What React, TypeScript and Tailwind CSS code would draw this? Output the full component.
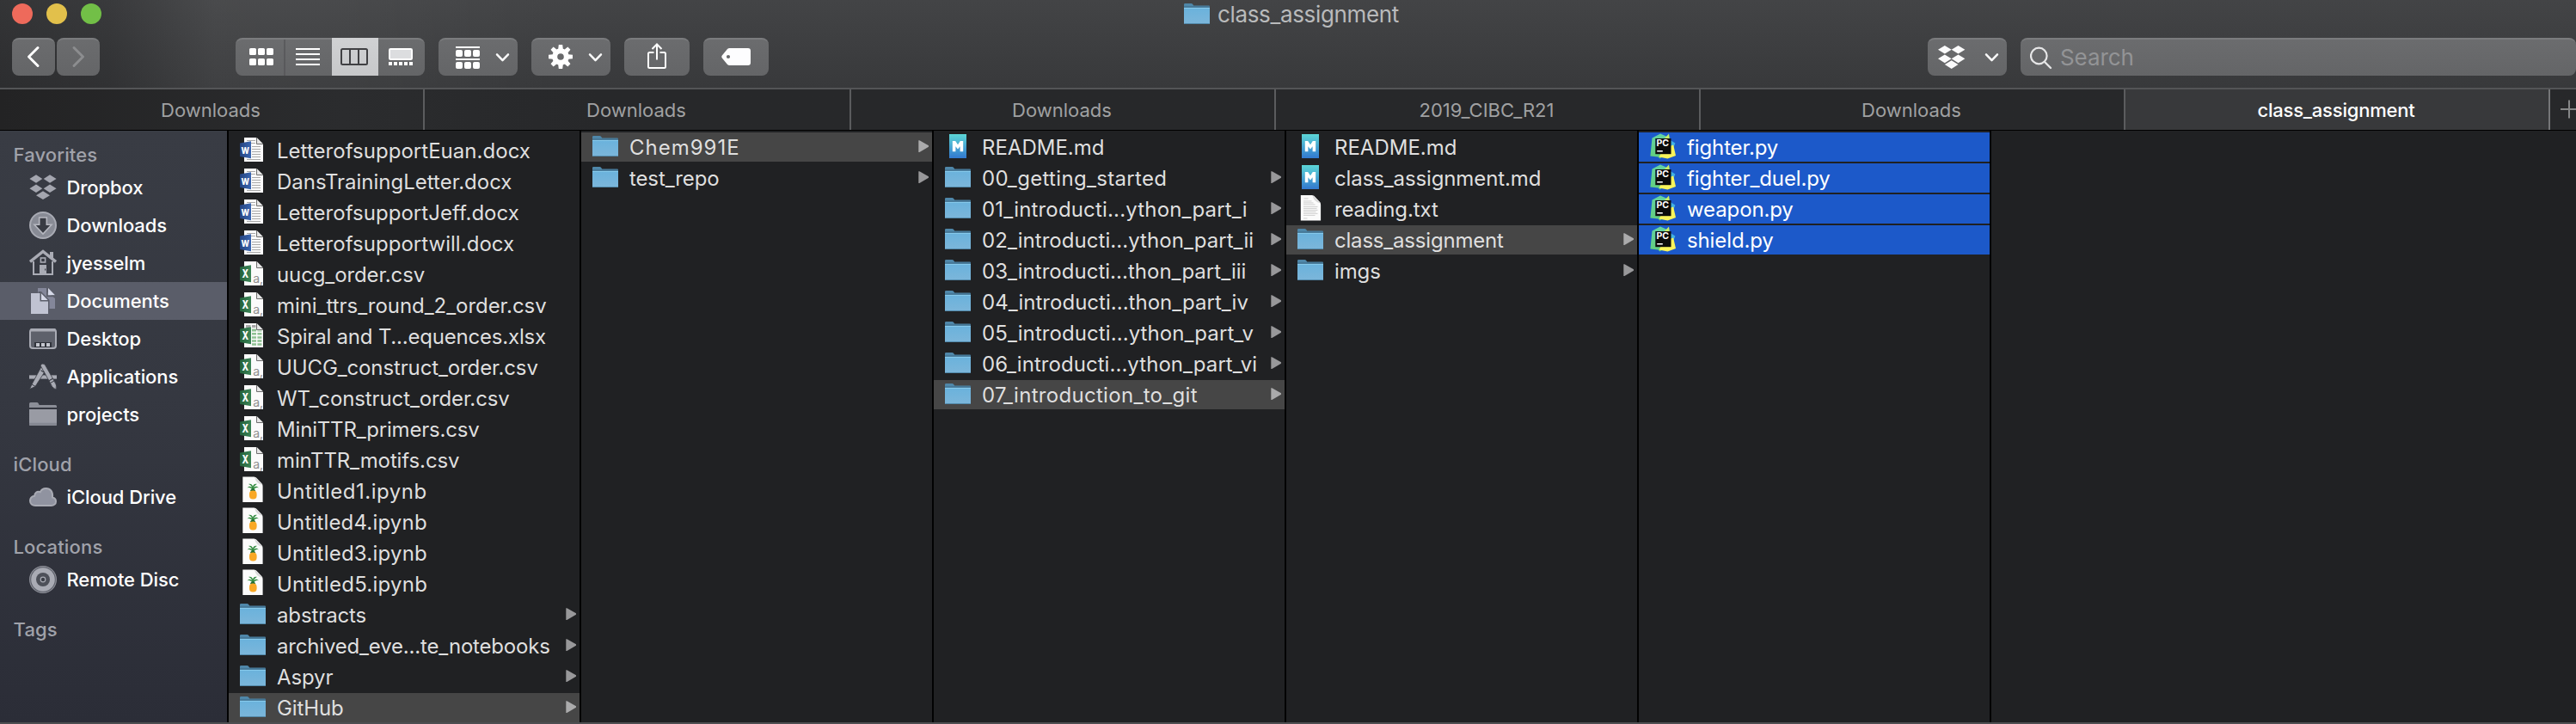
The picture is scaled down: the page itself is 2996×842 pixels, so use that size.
import type { ReactNode } from "react";

type Kind = "word" | "csv" | "xlsx" | "ipynb" | "folder" | "md" | "txt" | "py";
type Item = { name: string; kind: Kind; tracking?: string; state?: "path" | "selected" };

const DIGIT = "tracking-[0.17px]";
const NARROW = "tracking-[0.02px]";

const documents: Item[] = [
  { name: "LetterofsupportEuan.docx", kind: "word", tracking: "tracking-[0.03px]" },
  { name: "DansTrainingLetter.docx", kind: "word", tracking: "tracking-[0px]" },
  { name: "LetterofsupportJeff.docx", kind: "word", tracking: "tracking-[0.03px]" },
  { name: "Letterofsupportwill.docx", kind: "word", tracking: "tracking-[0.03px]" },
  { name: "uucg_order.csv", kind: "csv" },
  { name: "mini_ttrs_round_2_order.csv", kind: "csv", tracking: "tracking-[-0.05px]" },
  { name: "Spiral and T...equences.xlsx", kind: "xlsx", tracking: "tracking-[-0.2px]" },
  { name: "UUCG_construct_order.csv", kind: "csv" },
  { name: "WT_construct_order.csv", kind: "csv" },
  { name: "MiniTTR_primers.csv", kind: "csv", tracking: "tracking-[-0.18px]" },
  { name: "minTTR_motifs.csv", kind: "csv" },
  { name: "Untitled1.ipynb", kind: "ipynb", tracking: "tracking-[0.5px]" },
  { name: "Untitled4.ipynb", kind: "ipynb", tracking: "tracking-[0.18px]" },
  { name: "Untitled3.ipynb", kind: "ipynb", tracking: "tracking-[0.22px]" },
  { name: "Untitled5.ipynb", kind: "ipynb", tracking: "tracking-[0.26px]" },
  { name: "abstracts", kind: "folder" },
  { name: "archived_eve...te_notebooks", kind: "folder", tracking: "tracking-[-0.18px]" },
  { name: "Aspyr", kind: "folder" },
  { name: "GitHub", kind: "folder", state: "path" },
];

const github: Item[] = [
  { name: "Chem991E", kind: "folder", tracking: "tracking-[1px]", state: "path" },
  { name: "test_repo", kind: "folder" },
];

const course: Item[] = [
  { name: "README.md", kind: "md", tracking: "tracking-[0px]" },
  { name: "00_getting_started", kind: "folder", tracking: "tracking-[0.33px]" },
  { name: "01_introducti...ython_part_i", kind: "folder", tracking: DIGIT },
  { name: "02_introducti...ython_part_ii", kind: "folder", tracking: "tracking-[0.05px]" },
  { name: "03_introducti...thon_part_iii", kind: "folder", tracking: NARROW },
  { name: "04_introducti...thon_part_iv", kind: "folder", tracking: NARROW },
  { name: "05_introducti...ython_part_v", kind: "folder", tracking: "tracking-[0.08px]" },
  { name: "06_introducti...ython_part_vi", kind: "folder", tracking: "tracking-[0.05px]" },
  { name: "07_introduction_to_git", kind: "folder", tracking: "tracking-[0.3px]", state: "path" },
];

const lesson: Item[] = [
  { name: "README.md", kind: "md", tracking: "tracking-[0px]" },
  { name: "class_assignment.md", kind: "md" },
  { name: "reading.txt", kind: "txt" },
  { name: "class_assignment", kind: "folder", tracking: "tracking-[-0.2px]", state: "path" },
  { name: "imgs", kind: "folder" },
];

const scripts: Item[] = [
  { name: "fighter.py", kind: "py", state: "selected" },
  { name: "fighter_duel.py", kind: "py", state: "selected" },
  { name: "weapon.py", kind: "py", state: "selected" },
  { name: "shield.py", kind: "py", state: "selected" },
];

const FONT = "Inter, sans-serif";

function Defs() {
  return (
    <svg className="absolute h-0 w-0" aria-hidden="true">
      <defs>
        <linearGradient id="folder" x1="0" y1="0" x2="0" y2="1">
          <stop offset="0" stopColor="#6ab2dc" />
          <stop offset="1" stopColor="#7cb6da" />
        </linearGradient>
        <linearGradient id="md" x1="0" y1="0" x2="0" y2="1">
          <stop offset="0" stopColor="#5cd6d6" />
          <stop offset="1" stopColor="#3279cf" />
        </linearGradient>
        <linearGradient id="word" x1="0" y1="0" x2="1" y2="0">
          <stop offset="0" stopColor="#24427e" />
          <stop offset="1" stopColor="#3a67b3" />
        </linearGradient>
        <linearGradient id="excel" x1="0" y1="0" x2="1" y2="0">
          <stop offset="0" stopColor="#23603a" />
          <stop offset="1" stopColor="#3c8557" />
        </linearGradient>
        <linearGradient id="charm" x1="0" y1="0" x2="0" y2="1">
          <stop offset="0" stopColor="#63d3a4" />
          <stop offset="1" stopColor="#62cf7c" />
        </linearGradient>
      </defs>
    </svg>
  );
}

function FolderShape() {
  return (
    <g>
      <path d="M0 8V5.2Q0 4 1.2 4H8.5Q9.4 4 10 4.8L11.3 6.4H29Q30 6.4 30 7.4V12H0Z" fill="#4f87a9" />
      <rect y="7.6" width="30" height="1.2" fill="#37637f" />
      <path d="M0 9H30V27Q30 28 29 28H1Q0 28 0 27Z" fill="url(#folder)" />
      <rect y="8.8" width="30" height="1.1" fill="#8accee" />
      <rect x="0.4" y="27" width="29.2" height="1" fill="#5289aa" />
    </g>
  );
}

function Page({ x = 5 }: { x?: number }) {
  return (
    <g>
      <path d={x === 5 ? "M5 2H19.5L27 9.5V30H5Z" : "M3.3 0.6H16.5Q19 1 20.5 3L26 9Q26.6 10 26.6 12V30H3.3Z"} fill="#fbfbfb" />
      {x === 5 && <path d="M19.5 2V9.5H27" fill="#e6e6e6" stroke="#6f6f6f" strokeWidth="1" />}
      {x !== 5 && <path d="M17 0.8Q18.5 8.5 26.3 10Q24 6 17 0.8Z" fill="#d9d9d9" />}
    </g>
  );
}

function OfficeBlock({ letter, fill }: { letter: string; fill: string }) {
  return (
    <g>
      <path d="M0 8.5L13 6.3V26.2L0 24Z" fill={`url(#${fill})`} />
      <text x="6.2" y="21.2" textAnchor="middle" fontSize={letter === "W" ? 10.5 : 13} fontWeight="800" fontFamily={FONT} fill="#fff" textLength={letter === "W" ? 9.4 : 7.6} lengthAdjust="spacingAndGlyphs">
        {letter}
      </text>
    </g>
  );
}

function FileIcon({ kind }: { kind: Kind }) {
  let art: ReactNode = null;
  if (kind === "folder") art = <FolderShape />;
  if (kind === "word")
    art = (
      <g>
        <Page />
        <path d="M8 5.5H18M8 8.5H18M14 12.5H24M14 15.5H24M14 18.5H24M14 21.5H24M14 24.5H24M8 27.5H24" stroke="#a9a9a9" strokeWidth="1" />
        <OfficeBlock letter="W" fill="word" />
      </g>
    );
  if (kind === "csv")
    art = (
      <g>
        <Page />
        <text x="15.2" y="26.6" fontSize="14" fontFamily={FONT} fill="#8f8f8f">a,</text>
        <OfficeBlock letter="X" fill="excel" />
      </g>
    );
  if (kind === "xlsx")
    art = (
      <g>
        <Page />
        <path d="M7 4H12.5V7H7ZM14 4H18.5V7H14Z" fill="#a7a7a7" />
        <path d="M14 8.6H19V11.4H14ZM14 13H19V15.6H14ZM14 17.2H19V19.8H14ZM14 21.2H19V23.8H14ZM14 25.2H19V27.8H14ZM20.4 10.6H25.4V11.6H20.4ZM20.4 13H25.4V15.6H20.4ZM20.4 17.2H25.4V19.8H20.4ZM20.4 21.2H25.4V23.8H20.4ZM20.4 25.2H25.4V27.8H20.4Z" fill="#8fc293" />
        <OfficeBlock letter="X" fill="excel" />
      </g>
    );
  if (kind === "ipynb")
    art = (
      <g>
        <Page x={3} />
        <path d="M15 17C13.5 13 11 12.5 8.5 13.5C10.5 10.8 13 11.5 14.5 13.5C13 10.5 11.5 9.5 10 9C13 8 14.8 10 15 12C15.4 10 17 8 20 9C18.4 9.6 17.2 10.8 16 13.2C17.6 11.2 20 11 22 13.5C19.5 12.5 17 13 15.5 17Z" fill="#2f8a3d" />
        <path d="M12 17.2C12.5 14.8 13.8 14.4 15 14.4C16.2 14.4 17.6 14.8 18.2 17.2Z" fill="#226b33" />
        <rect x="11" y="16.6" width="8.6" height="10" rx="4" fill="#f9a825" />
      </g>
    );
  if (kind === "md")
    art = (
      <g>
        <rect x="5" y="2" width="20" height="28" fill="url(#md)" />
        <path d="M8.8 22.3V10H12.2L15 14.2L17.8 10H21.2V22.3H17.6V16.2L15 19.6L12.4 16.2V22.3Z" fill="#fff" />
      </g>
    );
  if (kind === "txt")
    art = (
      <g transform="translate(0.5 0.4)">
        <Page x={3} />
        <path d="M7 4.5H12M6.5 7.5H16M6.5 9.5H18M6.5 11.5H20M6.5 14H23M6.5 16H22M6.5 18H23M6.5 20H21M6.5 22H23M6.5 24H20M6.5 27.5H11" stroke="#c4c4c4" strokeWidth="0.8" />
      </g>
    );
  if (kind === "py")
    art = (
      <g>
        <path d="M2.5 6.5L12 1.4L19.5 4.8L18 26L11.5 30.6L9.5 28.6L0.4 27.4Z" fill="url(#charm)" />
        <path d="M16.5 7.5L22 1.5L23 8.5Z" fill="#c8ee62" />
        <path d="M22.5 9.5H24.5L29.4 12.6L27.6 17L23.5 19Z" fill="#41b0e4" />
        <path d="M23 16L27.2 14.5L30 27L20.5 30.6L10.5 28.4L13 24Z" fill="#f9f45a" />
        <rect x="6.3" y="7" width="18.2" height="18.2" fill="#0b0b0b" />
        <text x="7.4" y="16" fontSize="10.5" fontWeight="700" fontFamily={FONT} fill="#fff" textLength="14.6" lengthAdjust="spacingAndGlyphs">PC</text>
        <rect x="8.2" y="21" width="6.6" height="1.5" fill="#fff" />
      </g>
    );
  return (
    <svg className="h-[34px] w-[30px] shrink-0" viewBox="0 0 30 34">
      {art}
    </svg>
  );
}

function Row({ item }: { item: Item }) {
  const bg = item.state === "path" ? "bg-[#464646]" : item.state === "selected" ? "bg-[#1c59c9]" : "";
  const color = item.state === "selected" ? "text-white" : "text-[#dfdfdf]";
  return (
    <div className={`flex h-[34px] items-center pl-[13px] pr-[4px] ${bg} ${color}`}>
      <FileIcon kind={item.kind} />
      <span className={`ml-[13px] flex-1 whitespace-nowrap pt-[2px] text-[24px] leading-[34px] ${item.tracking ?? "tracking-[-0.12px]"}`}>
        {item.name}
      </span>
      {item.kind === "folder" && (
        <svg className="h-[34px] w-3" viewBox="0 0 12 34">
          <path d="M0.3 9.3L1.4 9.3L12 15.3V16.7L1.4 23H0.3Z" fill={item.state ? "#ababac" : "#98989a"} />
        </svg>
      )}
    </div>
  );
}

function Column({ items, pad = "pt-[2px]" }: { items: Item[]; pad?: string }) {
  return (
    <div className={`flex w-[410px] shrink-0 flex-col gap-[2px] overflow-hidden border-r-2 border-[#020202] ${pad}`}>
      {items.map((item) => (
        <Row key={item.name} item={item} />
      ))}
    </div>
  );
}

const dropbox = "M8 0L16 5L8 10L0 5ZM24 0L32 5L24 10L16 5ZM8 11L16 16L8 21L0 16ZM24 11L32 16L24 21L16 16ZM16 18L24 23L16 28L8 23Z";

const sideIcons: Record<string, ReactNode> = {
  Dropbox: <path d="M8 7.2L15.3 12L8 16.8L0.4 12ZM24 7.2L31.6 12L24 16.8L16.7 12ZM8 18.4L15.3 23.2L8 28L0.4 23.2ZM24 18.4L31.6 23.2L24 28L16.7 23.2ZM16 26.2L24 31.2L16 36L8 31.2Z" fill="#a4a6af" />,
  Downloads: (
    <g>
      <circle cx="16" cy="22" r="15" fill="#888b95" stroke="#a9abb4" strokeWidth="2" />
      <path d="M11.7 13H20.3V21.3H26L16 32L6 21.3H11.7Z" fill="#383b43" stroke="#b6b8c0" strokeWidth="1.6" />
    </g>
  ),
  jyesselm: (
    <g>
      <path d="M5 20V35H27V20" fill="none" stroke="#a9abb4" strokeWidth="2" />
      <path d="M1 20.5L16 8.5L31 20.5" fill="none" stroke="#a9abb4" strokeWidth="3.4" />
      <rect x="24" y="9" width="4" height="8" fill="#a9abb4" />
      <rect x="13.4" y="16" width="5.2" height="5" fill="none" stroke="#a9abb4" strokeWidth="1.6" />
      <rect x="12" y="24" width="8" height="11" fill="#a9abb4" />
      <rect x="18" y="28.5" width="1.2" height="2" fill="#383b43" />
    </g>
  ),
  Documents: (
    <g>
      <path d="M10 7H20V11L30 19V31H10Z" fill="#84879a" />
      <path d="M22 7L30 15.3H22Z" fill="#d6d9e8" />
      <path d="M20.8 7V16.4H30" fill="none" stroke="#5b5e6a" strokeWidth="1.6" />
      <path d="M10.5 11H14L23.5 21V37H10" fill="#5b5e6a" />
      <path d="M2 13H12.5V22.5H22V37H2Z" fill="#c0c3d2" />
      <path d="M14 13.2L21.6 21H14Z" fill="#d6d9e8" />
    </g>
  ),
  Desktop: (
    <g>
      <rect x="1" y="11" width="30" height="22" rx="3" fill="#5e616b" stroke="#a9abb4" strokeWidth="2" />
      <rect x="1" y="10" width="30" height="3.6" rx="1.6" fill="#a9abb4" />
      <rect x="6" y="26" width="20" height="6" fill="#30333b" />
      <path d="M8 27H12V31H8ZM14 27H18V31H14ZM20 27H24V31H20Z" fill="#c4c6ce" />
    </g>
  ),
  Applications: (
    <g fill="#a9abb4" stroke="#383b43" strokeWidth="0.8">
      <rect x="-0.4" y="20" width="32.8" height="5" />
      <path d="M14.3 10L20 13.2L7 33.5L3 31Z" />
      <path d="M3 31L7 33.5L0.5 36.6Z" />
      <path d="M13 9Q15.5 5.5 18.5 8.5L29 27L24.5 29.5Z" />
      <path d="M24.5 29.5L29 27Q33 32 31 37Q26 35 24.5 29.5Z" />
      <path d="M13.5 14.8L17.4 17M23 26.8L27.5 24.2" fill="none" strokeWidth="1.2" />
    </g>
  ),
  projects: (
    <g>
      <path d="M0 14V9.5Q0 8 1.5 8H9Q10 8 10.6 9L11.6 11H30.5Q32 11 32 12.5V14Z" fill="#8b8e97" />
      <path d="M0 16H32V33.5Q32 35 30.5 35H1.5Q0 35 0 33.5Z" fill="#999ba4" />
      <path d="M0 31.8H32V33.5Q32 35 30.5 35H1.5Q0 35 0 33.5Z" fill="#858892" />
    </g>
  ),
  "iCloud Drive": (
    <path d="M7 32H25.5C29 32 31 29.8 31 27.2C31 24.5 29.2 22.8 27 22.4C27.8 15.5 24.5 12 19.5 12C16 12 13.8 13.8 12.8 16.2C9 14.8 6 17.5 6.2 20.8C3 21.4 1 23.6 1 26.6C1 29.8 3.6 32 7 32Z" fill="#9093a0" stroke="#a9abb4" strokeWidth="2" />
  ),
  "Remote Disc": (
    <g>
      <circle cx="16" cy="22" r="15.4" fill="#5b5e68" stroke="#8b8d96" strokeWidth="1.2" />
      <circle cx="16" cy="22" r="13.8" fill="#a9abb4" />
      <circle cx="16" cy="22" r="8" fill="#4d5059" />
      <circle cx="16" cy="22" r="2.8" fill="#3c3f48" stroke="#a9abb4" strokeWidth="1.2" />
    </g>
  ),
};

function SideItem({ label, active }: { label: string; active?: boolean }) {
  return (
    <div className={`flex h-11 items-center pl-[34px] ${active ? "bg-[#5a5d69]" : ""}`}>
      <svg className="h-11 w-8 shrink-0" viewBox="0 0 32 44">{sideIcons[label]}</svg>
      <span className="ml-[11.5px] whitespace-nowrap text-[22px] font-medium leading-[44px] tracking-[-0.08px] text-white">{label}</span>
    </div>
  );
}

function SideHeading({ label, className }: { label: string; className: string }) {
  return <div className={`h-8 pl-[15.5px] text-[22px] font-medium leading-8 tracking-[0.15px] text-[#a0a2aa] ${className}`}>{label}</div>;
}

function Sidebar() {
  return (
    <nav className="flex w-[266px] shrink-0 flex-col border-r-2 border-[#020202] bg-linear-to-b from-[#393c44] via-[#353841] via-45% to-[#2b2d37]">
      <SideHeading label="Favorites" className="mt-3" />
      {["Dropbox", "Downloads", "jyesselm", "Documents", "Desktop", "Applications", "projects"].map((label) => (
        <SideItem key={label} label={label} active={label === "Documents"} />
      ))}
      <SideHeading label="iCloud" className="mt-5" />
      <SideItem label="iCloud Drive" />
      <SideHeading label="Locations" className="mt-5" />
      <SideItem label="Remote Disc" />
      <SideHeading label="Tags" className="mt-5" />
    </nav>
  );
}

const buttonLook = "h-11 border-t-2 border-[#7b7c7e] bg-linear-to-b from-[#6b6c6e] to-[#646567]";

function ToolButton({ w, view, round = "rounded-lg", children }: { w: string; view: number; round?: string; children: ReactNode }) {
  return (
    <button className={`${buttonLook} ${w} ${round} block shrink-0 overflow-hidden`}>
      <svg className="-mt-[2px] block h-11 w-full" viewBox={`0 0 ${view} 44`}>{children}</svg>
    </button>
  );
}

function Chevron({ x }: { x: number }) {
  return <path d={`M${x + 1} 19.4L${x + 7.5} 26.2L${x + 14} 19.4`} fill="none" stroke="#f8f8f8" strokeWidth="2.5" strokeLinecap="round" strokeLinejoin="round" />;
}

const teeth = [0, 45, 90, 135, 180, 225, 270, 315];

function Toolbar() {
  return (
    <div className="flex h-[58px] items-start pl-[14px]">
      <div className="flex gap-[2px]">
        <ToolButton w="w-[50px]" view={50}>
          <path d="M30 11.5L19.5 22L30 32.5" fill="none" stroke="#fff" strokeWidth="3" strokeLinecap="round" strokeLinejoin="round" />
        </ToolButton>
        <ToolButton w="w-[50px]" view={50}>
          <path d="M20 11.5L30.5 22L20 32.5" fill="none" stroke="#8c8d8f" strokeWidth="3" strokeLinecap="round" strokeLinejoin="round" />
        </ToolButton>
      </div>
      <div className="ml-[158px] flex">
        <ToolButton w="w-[58px]" view={58} round="rounded-l-lg">
          <g fill="#fff">
            {[16, 26, 36].map((x) => [12, 24].map((y) => <rect key={`${x}-${y}`} x={x} y={y} width="8" height="8" rx="1.6" />))}
          </g>
          <rect x="56.3" width="1.4" height="44" fill="#545557" />
        </ToolButton>
        <ToolButton w="w-[54px]" view={54} round="rounded-none">
          <path d="M12 13H40M12 19H40M12 25H40M12 31H40" stroke="#fff" strokeWidth="2" />
        </ToolButton>
        <button className="block h-11 w-[54px] bg-linear-to-b from-[#d0d1d3] to-[#c7c8ca]">
          <svg className="block h-11 w-[54px]" viewBox="0 0 54 44">
            <rect x="11" y="13" width="30" height="18" rx="1.5" fill="none" stroke="#404043" strokeWidth="2" />
            <path d="M21 13V31M31 13V31" stroke="#404043" strokeWidth="2" />
          </svg>
        </button>
        <ToolButton w="w-[54px]" view={54} round="rounded-r-lg">
          <rect x="13" y="13" width="26" height="12" rx="1.2" fill="#dcdddf" stroke="#fff" strokeWidth="2" />
          <path d="M12 28H16V32H12ZM18 28H22V32H18ZM24 28H28V32H24ZM30 28H34V32H30ZM36 28H40V32H36Z" fill="#fff" />
        </ToolButton>
      </div>
      <div className="ml-4 flex gap-4">
        <ToolButton w="w-[92px]" view={92}>
          <path d="M20 11H48M20 25H48" stroke="#fff" strokeWidth="2" />
          <g fill="#fff">
            {[20, 30, 40].map((x) => [14, 28].map((y) => <rect key={`${x}-${y}`} x={x} y={y} width="8" height="8" rx="2" />))}
          </g>
          <Chevron x={67} />
        </ToolButton>
        <ToolButton w="w-[92px]" view={92}>
          <g fill="#fff">
            {teeth.map((a) => (
              <path key={a} d="M31.2 13L31.8 8H36.2L36.8 13Z" transform={`rotate(${a} 34 22)`} />
            ))}
          </g>
          <circle cx="34" cy="22" r="6.8" fill="none" stroke="#fff" strokeWidth="6" />
          <Chevron x={67} />
        </ToolButton>
        <ToolButton w="w-[76px]" view={76}>
          <path d="M34.5 17H29.5Q28 17 28 18.5V33.5Q28 35 29.5 35H46.5Q48 35 48 33.5V18.5Q48 17 46.5 17H41.5" fill="none" stroke="#fff" strokeWidth="2" />
          <path d="M38 25.5V8M32.5 13L38 7.5L43.5 13" fill="none" stroke="#fff" strokeWidth="2" />
        </ToolButton>
        <ToolButton w="w-[76px]" view={76}>
          <path fillRule="evenodd" d="M30.5 12H52Q55 12 55 15V29Q55 32 52 32H30.5Q29 32 28 31L21.8 23.6Q20.5 22 21.8 20.4L28 13Q29 12 30.5 12ZM29 19.9A2.1 2.1 0 1 0 29 24.1A2.1 2.1 0 1 0 29 19.9Z" fill="#fdfdfe" />
        </ToolButton>
      </div>
      <div className="ml-auto flex gap-4">
        <ToolButton w="w-[92px]" view={92}>
          <path d={dropbox} transform="translate(12 9) scale(0.98 0.96)" fill="#fbfbfc" />
          <Chevron x={67} />
        </ToolButton>
        <div className={`${buttonLook} flex w-[646px] items-center rounded-lg`}>
          <svg className="-mt-[2px] ml-[11px] h-11 w-[26px]" viewBox="0 0 26 44">
            <circle cx="10.3" cy="21" r="9.3" fill="none" stroke="#e6e6e7" strokeWidth="2.2" />
            <path d="M17 28L24 35" stroke="#e6e6e7" strokeWidth="2.4" strokeLinecap="round" />
          </svg>
          <span className="-mt-px ml-[9px] text-[26px] leading-10 tracking-[-0.1px] text-[#939496]">Search</span>
        </div>
      </div>
    </div>
  );
}

function Tab({ label, w = "w-[494px]", active }: { label: string; w?: string; active?: boolean }) {
  return (
    <div
      className={`flex h-[47px] ${w} shrink-0 items-center justify-center border-r-2 pr-[2px] pt-[2px] text-[22px] leading-[45px] ${
        active ? "border-[#757678] bg-[#38393b] font-medium tracking-[-0.2px] text-white" : "border-[#5b5c5e] text-[#a0a1a2]"
      }`}
    >
      {label}
    </div>
  );
}

export default function App() {
  return (
    <div className="flex h-[842px] w-[2996px] flex-col overflow-hidden bg-[#202123] font-['Inter',sans-serif]">
      <Defs />
      <header className="h-[104px] shrink-0 border-b-2 border-[#545557] bg-[linear-gradient(90deg,rgba(20,20,22,0.32)_0px,rgba(20,20,22,0.2)_130px,rgba(255,255,255,0.035)_250px,rgba(255,255,255,0.03)_400px,rgba(255,255,255,0)_650px),linear-gradient(180deg,#434446,#38393b)]">
        <div className="flex h-11 items-start pl-[14px] pt-1">
          <div className="flex gap-4">
            <span className="h-6 w-6 rounded-full bg-[#ee6a5b]" />
            <span className="h-6 w-6 rounded-full bg-[#e2c04b]" />
            <span className="h-6 w-6 rounded-full bg-[#72bf47]" />
          </div>
          <div className="ml-[1259px] flex items-start">
            <svg className="h-[34px] w-[30px]" viewBox="0 4 30 34">
              <FolderShape />
            </svg>
            <span className="-mt-[3px] ml-[9px] text-[26px] leading-8 tracking-[-0.35px] text-[#b9babb]">class_assignment</span>
          </div>
        </div>
        <Toolbar />
      </header>
      <div className="flex h-12 shrink-0 border-b border-black bg-linear-to-r from-[#232324] via-[#2b2c2e] via-[400px] to-[#27282a] to-[700px]">
        <Tab label="Downloads" />
        <Tab label="Downloads" w="w-[496px]" />
        <Tab label="Downloads" />
        <Tab label="2019_CIBC_R21" />
        <Tab label="Downloads" />
        <Tab label="class_assignment" active />
        <svg className="h-[47px] w-[30px] shrink-0" viewBox="0 0 30 47">
          <path d="M12 23H32M22 12.5V33.5" stroke="#868788" strokeWidth="2" />
        </svg>
      </div>
      <main className="flex h-[688px] shrink-0">
        <Sidebar />
        <Column items={documents} pad="pt-[6px]" />
        <Column items={github} />
        <Column items={course} />
        <Column items={lesson} />
        <Column items={scripts} />
      </main>
      <footer className="h-[2px] shrink-0 bg-[#4d4e51]" />
    </div>
  );
}
